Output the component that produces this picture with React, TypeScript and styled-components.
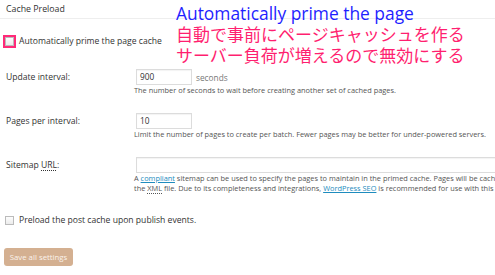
import React from 'react';
import { styled, createGlobalStyle } from 'styled-components';

const GlobalStyle = createGlobalStyle`
  html, body {
    margin: 0;
    padding: 0;
    background: #fff;
  }
  body {
    width: 495px;
    height: 275px;
    overflow: hidden;
    font-family: 'Open Sans', 'Noto Sans', sans-serif;
    color: #333;
  }
`;

const Page = styled.div`
  position: relative;
  width: 495px;
  height: 275px;
  overflow: hidden;
`;

const SectionTitle = styled.div`
  height: 19px;
  box-sizing: border-box;
  padding: 3px 0 0 6px;
  font-size: 8.8px;
  line-height: 12px;
  color: #333;
  border-bottom: 1px solid #eeeeee;
`;

const CheckRow = styled.label<{ $top: number }>`
  display: flex;
  align-items: center;
  gap: 5px;
  height: 12px;
  margin-top: ${(p) => p.$top}px;
  padding-left: 5px;
  font-size: 8.6px;
  color: #333;
  white-space: nowrap;
`;

const Checkbox = styled.span<{ $marked?: boolean }>`
  display: inline-block;
  width: 7px;
  height: 7px;
  border: 1px solid #bbb;
  background: linear-gradient(#fdfdfd, #ececec);
  box-shadow: ${(p) => (p.$marked ? '0 0 0 2px #ff2a78' : 'none')};
  flex: none;
`;

const FormTable = styled.div`
  margin-top: 13px;
  display: flex;
  flex-direction: column;
`;

const Row = styled.div`
  display: grid;
  grid-template-columns: 130px 1fr;
  padding: 9px 0 9px 6px;
`;

const Label = styled.div`
  font-size: 8.6px;
  line-height: 16px;
  color: #333;
  white-space: nowrap;
`;

const Field = styled.div`
  display: flex;
  flex-direction: column;
  min-width: 0;
`;

const InputLine = styled.div`
  display: flex;
  align-items: center;
  gap: 4px;
  height: 16px;
`;

const TextBox = styled.div<{ $wide?: boolean }>`
  box-sizing: border-box;
  width: ${(p) => (p.$wide ? '420px' : '56px')};
  height: 16px;
  border: 1px solid #dcdcdc;
  box-shadow: inset 0 1px 1px rgba(0, 0, 0, 0.05);
  padding-left: 3px;
  font-size: 8.3px;
  line-height: 14px;
  color: #333;
  flex: none;
`;

const Unit = styled.span`
  font-size: 8.3px;
  color: #777;
`;

const Description = styled.div`
  font-size: 7.4px;
  line-height: 10px;
  color: #555;
  white-space: nowrap;
  margin-left: -2px;
`;

const Link = styled.a`
  color: #1e8cbe;
  text-decoration: underline;
`;

const Abbr = styled.abbr`
  text-decoration: underline dotted;
  text-underline-offset: 2px;
`;

const SaveButton = styled.button`
  display: block;
  margin: 22px 0 0 4px;
  width: 69px;
  height: 18px;
  padding: 0;
  border: none;
  border-radius: 3px;
  background: #d4b091;
  color: #fbf3ec;
  font-family: 'Open Sans', sans-serif;
  font-size: 7.8px;
`;

const Annotation = styled.div`
  position: absolute;
  left: 176px;
  top: 2px;
  white-space: nowrap;
  pointer-events: none;
`;

const AnnotationTitle = styled.div`
  font-family: 'Open Sans', 'Noto Sans', sans-serif;
  font-size: 17.4px;
  line-height: 22px;
  color: #1f1fff;
`;

const AnnotationNote = styled.div`
  font-family: 'Noto Sans CJK JP', 'Noto Sans', sans-serif;
  font-size: 17px;
  line-height: 20.5px;
  color: #ff1f70;
`;

export default function App() {
  return (
    <Page>
      <GlobalStyle />
      <SectionTitle>Cache Preload</SectionTitle>

      <CheckRow $top={16}>
        <Checkbox $marked />
        Automatically prime the page cache
      </CheckRow>

      <FormTable>
        <Row>
          <Label>Update interval:</Label>
          <Field>
            <InputLine>
              <TextBox>900</TextBox>
              <Unit>seconds</Unit>
            </InputLine>
            <Description>
              The number of seconds to wait before creating another set of cached pages.
            </Description>
          </Field>
        </Row>
        <Row>
          <Label>Pages per interval:</Label>
          <Field>
            <InputLine>
              <TextBox>10</TextBox>
            </InputLine>
            <Description>
              Limit the number of pages to create per batch. Fewer pages may be better for
              under-powered servers.
            </Description>
          </Field>
        </Row>
        <Row>
          <Label>
            Sitemap <Abbr>URL</Abbr>:
          </Label>
          <Field>
            <InputLine>
              <TextBox $wide />
            </InputLine>
            <Description>
              A <Link>compliant</Link> sitemap can be used to specify the pages to maintain in
              the primed cache. Pages will be cached in the order they appear in
            </Description>
            <Description>
              the <Abbr>XML</Abbr> file. Due to its completeness and integrations,{' '}
              <Link>WordPress SEO</Link> is recommended for use with this feature.
            </Description>
          </Field>
        </Row>
      </FormTable>

      <CheckRow $top={12}>
        <Checkbox />
        Preload the post cache upon publish events.
      </CheckRow>

      <SaveButton>Save all settings</SaveButton>

      <Annotation>
        <AnnotationTitle>Automatically prime the page</AnnotationTitle>
        <AnnotationNote>自動で事前にページキャッシュを作る</AnnotationNote>
        <AnnotationNote>サーバー負荷が増えるので無効にする</AnnotationNote>
      </Annotation>
    </Page>
  );
}
